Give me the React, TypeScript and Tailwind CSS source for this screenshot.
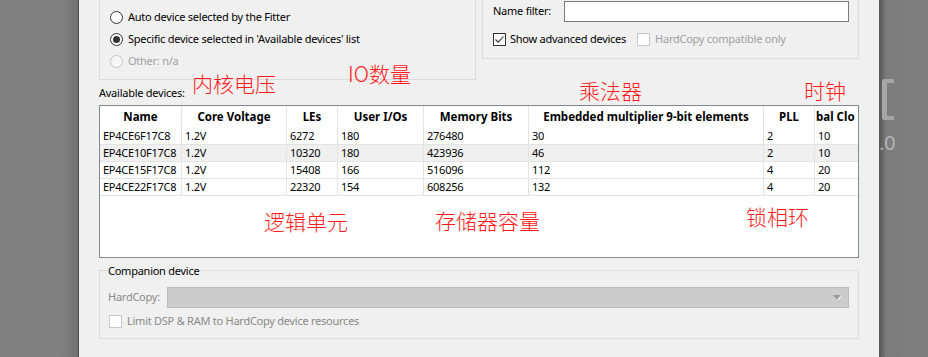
import React from "react";

const rows = [
  ["EP4CE6F17C8", "1.2V", "6272", "180", "276480", "30", "2", "10"],
  ["EP4CE10F17C8", "1.2V", "10320", "180", "423936", "46", "2", "10"],
  ["EP4CE15F17C8", "1.2V", "15408", "166", "516096", "112", "4", "20"],
  ["EP4CE22F17C8", "1.2V", "22320", "154", "608256", "132", "4", "20"],
];

// last header is scrolled out of view, only its middle shows
const headers = ["Name", "Core Voltage", "LEs", "User I/Os", "Memory Bits", "Embedded multiplier 9-bit elements", "PLL", "bal Clo"];

const colW = ["w-[82px]", "w-[105px]", "w-[51px]", "w-[86px]", "w-[105px]", "w-[235px]", "w-[51px]", "w-[43px]"];

function Radio({ checked, disabled, label }: { checked?: boolean; disabled?: boolean; label: string }) {
  return (
    <div className="flex items-center h-[22px]">
      <div
        className={`w-[13px] h-[13px] rounded-full border flex items-center justify-center ${
          disabled ? "border-[#c4c4c4] bg-[#f7f7f7]" : "border-[#333] bg-white"
        }`}
      >
        {checked && <div className="w-[7px] h-[7px] rounded-full bg-[#333]" />}
      </div>
      <span className={`ml-[5px] ${disabled ? "text-[#a0a0a0]" : "text-black"}`}>{label}</span>
    </div>
  );
}

function Check({ checked, disabled }: { checked?: boolean; disabled?: boolean }) {
  return (
    <div
      className={`w-[13px] h-[13px] border flex items-center justify-center ${
        disabled ? "border-[#c8c8c8] bg-white" : "border-[#333] bg-white"
      }`}
    >
      {checked && (
        <svg width="11" height="11" viewBox="0 0 11 11">
          <path d="M1.5 5.5 L4.2 8.2 L9.5 2.5" fill="none" stroke="#333" strokeWidth="1.1" />
        </svg>
      )}
    </div>
  );
}

export default function App() {
  return (
    <div className="relative w-[928px] h-[357px] flex overflow-hidden bg-[#808080] font-['Noto_Sans',sans-serif] text-[11px] tracking-[-0.25px] text-black">
      {/* left backdrop */}
      <div className="w-[78px] shrink-0 bg-gradient-to-r from-[#808080] from-80% to-[#707070]" />

      {/* dialog */}
      <div className="w-[801px] shrink-0 border-l border-[#4a4a4a] bg-[#f0f0f0] px-[20px]">
        <div className="flex justify-between -mt-[20px]">
          <div className="w-[377px] h-[100px] border border-[#dcdcdc] pt-[25px] pl-[10px]">
            <Radio label="Auto device selected by the Fitter" />
            <Radio checked label="Specific device selected in 'Available devices' list" />
            <Radio disabled label="Other:  n/a" />
          </div>
          <div className="w-[377px] h-[79px] border border-[#dcdcdc] pt-[20px] pl-[10px] pr-[9px]">
            <div className="flex items-center h-[21px]">
              <span className="w-[71px]">Name filter:</span>
              <div className="flex-1 h-[21px] border border-[#7a7a7a] bg-white" />
            </div>
            <div className="flex items-center mt-[9px]">
              <Check checked />
              <span className="ml-[4px]">Show advanced devices</span>
              <div className="ml-[11px]">
                <Check disabled />
              </div>
              <span className="ml-[5px] text-[#a0a0a0]">HardCopy compatible only</span>
            </div>
          </div>
        </div>

        <div className="mt-[3px] mb-[2px] h-[20px] flex items-center">Available devices:</div>

        <div className="h-[153px] border border-[#828790] bg-white overflow-hidden">
          <div className="flex h-[22px] font-bold text-[11.5px] tracking-[0px]">
            {headers.map((h, i) => (
              <div
                key={h}
                className={`${colW[i]} shrink-0 flex items-center whitespace-nowrap overflow-hidden ${
                  i < 7 ? "justify-center border-r border-[#e5e5e5]" : "pl-px"
                }`}
              >
                {h}
              </div>
            ))}
          </div>
          {rows.map((r, ri) => (
            <div key={r[0]} className={`flex h-[17px] border-b border-[#e3e3e3] ${ri === 1 ? "bg-[#f0f0f0]" : "bg-white"}`}>
              {r.map((c, ci) => (
                <div
                  key={ci}
                  className={`${colW[ci]} shrink-0 flex items-center pl-[3px] whitespace-nowrap overflow-hidden ${
                    ci < 7 ? "border-r border-[#e3e3e3]" : ""
                  }`}
                >
                  {c}
                </div>
              ))}
            </div>
          ))}
        </div>

        <div className="mt-[12px] h-[69px] border border-[#dcdcdc] relative">
          <div className="absolute -top-[8px] left-[7px] px-px bg-[#f0f0f0] leading-[15px]">Companion device</div>
          <div className="flex items-center mt-[16px] pl-[8px] pr-[9px] h-[21px]">
            <span className="w-[59px] text-[#8a8a8a]">HardCopy:</span>
            <div className="flex-1 h-[21px] border border-[#bcbcbc] bg-[#cccccc] flex items-center justify-end pr-[6px]">
              <svg width="9" height="7" viewBox="0 0 9 7">
                <path d="M0 1 H8 L4 5.5 Z" fill="#9a9a9a" />
                <path d="M8 1.5 L5 6" stroke="#fff" strokeWidth="1" />
              </svg>
            </div>
          </div>
          <div className="flex items-center mt-[5px] pl-[9px]">
            <Check disabled />
            <span className="ml-[5px] text-[#8a8a8a]">Limit DSP &amp; RAM to HardCopy device resources</span>
          </div>
        </div>
      </div>

      {/* right backdrop */}
      <div className="flex-1 bg-gradient-to-r from-[#555] via-[#7c7c7c] via-15% to-[#7f7f7f] relative">
        <div className="absolute left-[3px] top-[79px] w-[12px] h-[41px] border-l-[5px] border-y-[4px] border-[#a6a6a6] rounded-l-[3px]" />
        <div className="absolute left-[0px] top-[128px] text-[20px] text-[#b4b4b4] font-['Liberation_Sans',sans-serif]">.0</div>
      </div>

      {/* red annotations */}
      <div className="absolute inset-0 pointer-events-none font-['Noto_Sans_CJK_SC',sans-serif] text-[21px] leading-none tracking-normal text-[#ff1a1a] font-light">
        <span className="absolute left-[192px] top-[73px]">内核电压</span>
        <span className="absolute left-[348px] top-[63px]">IO数量</span>
        <span className="absolute left-[579px] top-[80px]">乘法器</span>
        <span className="absolute left-[804px] top-[80px]">时钟</span>
        <span className="absolute left-[264px] top-[211px]">逻辑单元</span>
        <span className="absolute left-[435px] top-[210px]">存储器容量</span>
        <span className="absolute left-[746px] top-[206px]">锁相环</span>
      </div>
    </div>
  );
}
